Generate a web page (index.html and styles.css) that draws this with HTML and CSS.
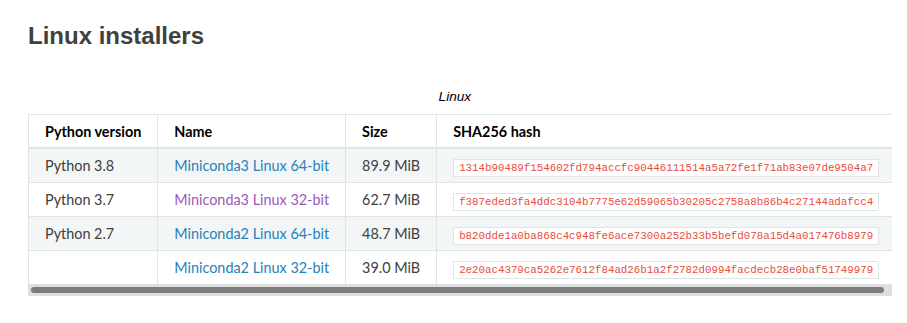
FILE: index.html
```html
<!DOCTYPE html>
<html lang="en">
<head>
    <meta charset="UTF-8">
    <meta name="viewport" content="width=device-width, initial-scale=1.0">
    <title>Linux installers</title>
    <link rel="stylesheet" href="styles.css">
</head>
<body>
    <div class="section" id="linux-installers">
        <h2>Linux installers</h2>

        <div class="table-wrapper">
            <table class="installers">
                <caption>
                    <span class="caption-text">Linux</span><a class="headerlink" href="#linux-installers">¶</a>
                </caption>
                <thead>
                    <tr>
                        <th>Python version</th>
                        <th>Name</th>
                        <th>Size</th>
                        <th>SHA256 hash</th>
                    </tr>
                </thead>
                <tbody>
                    <tr class="row-odd">
                        <td>Python 3.8</td>
                        <td><a href="#">Miniconda3 Linux 64-bit</a></td>
                        <td>89.9 MiB</td>
                        <td><code>1314b90489f154602fd794accfc90446111514a5a72fe1f71ab83e07de9504a7</code></td>
                    </tr>
                    <tr class="row-even">
                        <td>Python 3.7</td>
                        <td><a href="#" class="visited">Miniconda3 Linux 32-bit</a></td>
                        <td>62.7 MiB</td>
                        <td><code>f387eded3fa4ddc3104b7775e62d59065b30205c2758a8b86b4c27144adafcc4</code></td>
                    </tr>
                    <tr class="row-odd">
                        <td>Python 2.7</td>
                        <td><a href="#">Miniconda2 Linux 64-bit</a></td>
                        <td>48.7 MiB</td>
                        <td><code>b820dde1a0ba868c4c948fe6ace7300a252b33b5befd078a15d4a017476b8979</code></td>
                    </tr>
                    <tr class="row-even">
                        <td></td>
                        <td><a href="#">Miniconda2 Linux 32-bit</a></td>
                        <td>39.0 MiB</td>
                        <td><code>2e20ac4379ca5262e7612f84ad26b1a2f2782d0994facdecb28e0baf51749979</code></td>
                    </tr>
                </tbody>
            </table>
        </div>
        <div class="scroll-track">
            <div class="scroll-thumb"></div>
        </div>
    </div>
</body>
</html>
```

FILE: styles.css
```css
* {
    margin: 0;
    padding: 0;
    box-sizing: border-box;
}

body {
    font-family: Lato, "Liberation Sans", Arial, sans-serif;
    font-size: 16px;
    color: #404040;
    background: #fff;
}

.section {
    padding: 22px 15px 0 28px;
}

h2 {
    font-family: "Liberation Sans", Arial, sans-serif;
    font-size: 24px;
    font-weight: 700;
    line-height: 1.2;
    color: #404040;
    margin-bottom: 21px;
}

.table-wrapper {
    max-width: 100%;
    overflow: hidden;
}

.scroll-track {
    display: flex;
    height: 11px;
    padding: 2px 8px 3px 3px;
    background: #dedede;
}

.scroll-thumb {
    flex: 1;
    background: #7c7c7c;
    border-radius: 3px;
}

.installers {
    border-collapse: collapse;
    border-spacing: 0;
    border: 1px solid #e1e4e5;
}

caption {
    color: #000;
    font: italic 13.6px/1 "Liberation Sans", Arial, sans-serif;
    padding: 17px 0 11px;
    text-align: center;
}

.headerlink {
    opacity: 0;
    font-size: 14px;
    margin-left: 0.5em;
    color: #404040;
    text-decoration: none;
}

th,
td {
    font-size: 90%;
    padding: 8px 16px;
    white-space: nowrap;
    text-align: left;
    vertical-align: middle;
    border-left: 1px solid #e1e4e5;
    border-bottom: 1px solid #e1e4e5;
}

th {
    font-weight: 700;
    color: #000;
    padding-bottom: 7px;
    border-bottom: 2px solid #e1e4e5;
}

.row-odd td {
    background-color: #f3f6f6;
}

a {
    color: #2980b9;
    text-decoration: none;
}

a.visited {
    color: #9b59b6;
}

code {
    font-family: "Liberation Mono", "Courier New", monospace;
    font-size: 75%;
    color: #e74c3c;
    background: #fff;
    border: 1px solid #e1e4e5;
    padding: 2px 5px;
}
```
